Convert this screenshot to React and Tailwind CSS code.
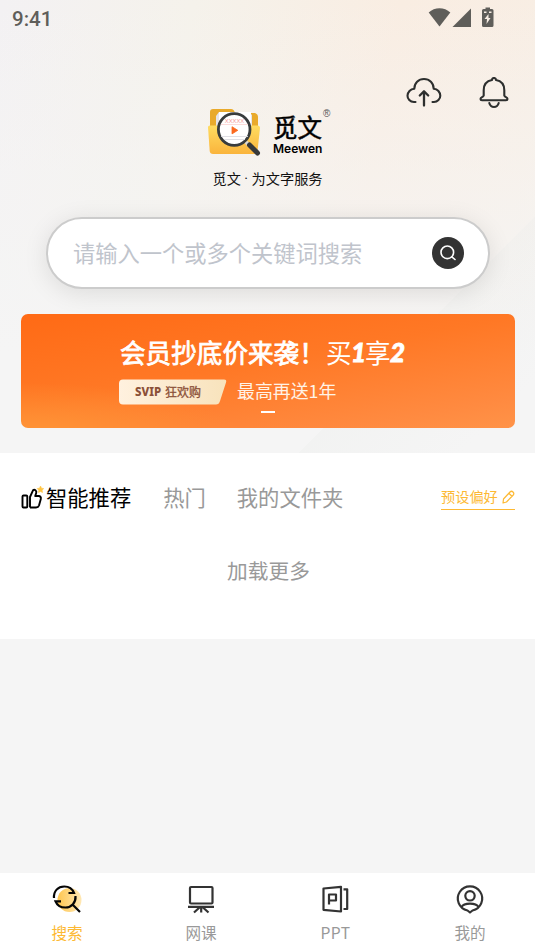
import { useState } from "react";

const navItems = [
  { key: "search", label: "搜索", Icon: SearchNavIcon },
  { key: "course", label: "网课", Icon: BoardIcon },
  { key: "ppt", label: "PPT", Icon: PptIcon },
  { key: "mine", label: "我的", Icon: UserIcon },
];

function StatusBar() {
  return (
    <div className="flex h-[38px] items-center justify-between pl-3 pr-[41px] text-[#5f5e5a]">
      <span className="font-['Roboto'] text-[20.5px] font-medium leading-6">9:41</span>
      <svg width="66" height="22" viewBox="0 0 66 22" fill="currentColor" className="-mt-[3px]">
        <path d="M.7 5.500C6.500-.3 16.500-.3 22.300 5.500L11.500 19.500Z" />
        <path d="M43 1.500V20H24.500Z" />
        <path
          fillRule="evenodd"
          d="M57.500 .5h4.500v1.500h2q1.500 0 1.500 1.500v15q0 1.500-1.500 1.500h-8.500q-1.500 0-1.500-1.500V3.500q0-1.500 1.500-1.500h2ZM60.500 7l-4 5h2.500l-.5 5 4-6H60.500ZM56 4.500v1.500h2.500v-1.500ZM61 4.500v1.500h2.500v-1.500Z"
        />
      </svg>
    </div>
  );
}

function CloudUploadIcon() {
  return (
    <svg width="36" height="32" viewBox="0 0 36 32" fill="none" stroke="#2d2f2e" strokeWidth="2.100" strokeLinecap="round" strokeLinejoin="round">
      <path d="M9.500 25H8C4 25 1.500 22 1.500 18.800C1.500 15 4.500 12 8.300 11.700C8.300 6 12.500 2 18 2S27.700 6 27.700 11.700C31.500 12 34.300 15 34.300 18.800C34.300 22 31.500 25 28 25H26.500" />
      <path d="M18 28.500V14.500M13.800 18.500L18 14.200L22.200 18.500" strokeWidth="2.300" />
    </svg>
  );
}

function BellIcon() {
  return (
    <svg width="30" height="32" viewBox="0 0 30 32" fill="none" stroke="#2d2f2e" strokeWidth="2.100" strokeLinecap="round" strokeLinejoin="round">
      <path d="M13 3a2 2 0 0 1 4 0C22.500 4 25.300 7.900 25.300 13.200V18.500C25.800 20.300 28.500 20 28.500 22Q28.500 23.200 27 23.200H3Q1.500 23.200 1.500 22C1.500 20 4.200 20.300 4.700 18.500V13.200C4.700 7.900 7.500 4 13 3Z" />
      <path d="M10.300 26C11 28.500 12.700 30 15 30S19 28.500 19.700 26" />
    </svg>
  );
}

function FolderLogo() {
  return (
    <svg width="53" height="48" viewBox="0 0 53 48" className="shrink-0">
      <defs>
        <linearGradient id="folder" x1="0" y1="0" x2="0" y2="1">
          <stop offset="0" stopColor="#ffdc60" />
          <stop offset="1" stopColor="#fab43c" />
        </linearGradient>
      </defs>
      <path d="M2 21V4Q2 1 5 1H23Q26 1 27 5H47Q50 6 50 9V22Z" fill="#e9aa2b" />
      <path d="M8 8L11 4H41L44 7V37H8Z" fill="#e5e4e8" />
      <path d="M11 4H43V35H11Z" fill="#fff" />
      <path d="M0 19Q0 17.500 2 17.500H49.500Q52 17.500 52 20L49.500 43Q49 46 46 46H5Q2 46 1.700 43Z" fill="url(#folder)" />
      <circle cx="26.200" cy="21.500" r="15.800" fill="#fff" stroke="#383c3d" strokeWidth="2.800" />
      <text x="26.500" y="14.500" textAnchor="middle" fontFamily="Liberation Sans" fontSize="5.800" fill="#f59b9a">XXXXX</text>
      <path d="M13 16.500H40" stroke="#fbd2d0" strokeWidth=".8" />
      <path d="M13 28.500H40M16 31.500H37" stroke="#dcdce2" strokeWidth=".9" />
      <path d="M24 18.700L29.800 22.300L24 25.900Z" fill="#fb691e" stroke="#fb691e" strokeWidth=".8" strokeLinejoin="round" />
      <path d="M38 34L41 37.300" stroke="#d8d9d8" strokeWidth="3.500" />
      <path d="M41.500 37L49.500 45" stroke="#37393a" strokeWidth="5" strokeLinecap="round" />
    </svg>
  );
}

function Header() {
  return (
    <>
      <div className="mt-[39px] flex h-[31px] items-start justify-end gap-[37px] pr-[26px]">
        <CloudUploadIcon />
        <BellIcon />
      </div>
      <div className="flex flex-col items-center">
        <div className="flex h-[48px] w-[119px] items-start gap-3">
          <FolderLogo />
          <div className="flex flex-col">
            <div className="flex h-[35px] items-start">
              <span className="w-[50px] whitespace-nowrap text-[24.500px] leading-[37px] text-black [-webkit-text-stroke:0.5px_#000]">觅文</span>
              <span className="mt-[1px] font-['Liberation_Sans'] text-[10px] leading-[10px] text-[#555]">®</span>
            </div>
            <span className="font-['Inter'] text-[12px] font-semibold leading-[12px] text-black">Meewen</span>
          </div>
        </div>
        <p className="mt-[12px] text-[14.200px] leading-[20px] text-[#111]">
          觅文<span className="font-['Roboto']"> · </span>为文字服务
        </p>
      </div>
    </>
  );
}

function SearchBox() {
  return (
    <div className="mx-[46px] mt-[28px] flex h-[72px] w-[444px] items-center justify-between rounded-full border-2 border-[#ccc] bg-white pl-[25px] pr-[24px] shadow-[0_4px_24px_rgba(0,0,0,0.1)]">
      <span className="-mt-[3px] text-[22.250px] leading-[32px] text-[#c0c4cc]">请输入一个或多个关键词搜索</span>
      <button className="flex size-8 items-center justify-center rounded-full bg-[#333]">
        <svg width="16" height="16" viewBox="0 0 16 16" fill="none" stroke="#fff" strokeWidth="1.600" strokeLinecap="round">
          <circle cx="7.300" cy="7.300" r="6.300" />
          <path d="M11.800 11.800L15 14.500" />
        </svg>
      </button>
    </div>
  );
}

function Banner() {
  return (
    <div className="mx-[21px] mt-[25px] flex h-[114px] w-[494px] flex-col rounded-[7px] bg-[radial-gradient(ellipse_at_0%_110%,#ff9838_0%,transparent_32%),linear-gradient(170deg,#ff6a15_0%,#ff7825_45%,#ff8a40_85%,#ff9348_100%)] pl-[98px] text-white">
      <div className="mt-[20px] flex h-[36px] items-center whitespace-nowrap pl-[1px] text-[25.600px] leading-[36px]">
        <span className="w-[206px] [-webkit-text-stroke:0.8px_#fff]">会员抄底价来袭！</span>
        <span className="w-[25px]">买</span>
        <span className="w-[14px] font-['Lato'] text-[26px] font-black italic [-webkit-text-stroke:0.8px_#fff]">1</span>
        <span className="w-[25px]">享</span>
        <span className="font-['Lato'] text-[26px] font-black italic [-webkit-text-stroke:0.8px_#fff]">2</span>
      </div>
      <div className="mt-[8px] flex h-[27px] items-center">
        <div className="relative flex h-[26px] w-[108px] items-center pl-[16px] text-[#8b5038]">
          <svg className="absolute left-0 top-0" width="108" height="26" viewBox="0 0 108 26">
            <defs>
              <linearGradient id="tag">
                <stop offset="0" stopColor="#fff1df" />
                <stop offset="1" stopColor="#f8e3bc" />
              </linearGradient>
            </defs>
            <path d="M4 .5H105Q108 .5 107 3.500L101 22Q100 25.500 97 25.500H4Q0 25.500 0 21.500V4.500Q0 .5 4 .5Z" fill="url(#tag)" />
          </svg>
          <span className="relative w-[30px] font-['Noto_Sans'] text-[11.500px] font-extrabold">SVIP</span>
          <span className="relative text-[12px] [-webkit-text-stroke:0.3px_#8b5038]">狂欢购</span>
        </div>
        <span className="-mt-[3px] ml-[10px] text-[17.900px] leading-[26px] text-[#fff3e6]">最高再送1年</span>
      </div>
      <span className="ml-[142px] mt-[6px] h-[2px] w-[14px] bg-white" />
    </div>
  );
}

function ThumbIcon() {
  return (
    <svg width="24" height="24" viewBox="0 0 24 24" fill="none" stroke="#000" strokeWidth="1.900" strokeLinejoin="round">
      <rect x="2.500" y="10.500" width="4.800" height="12" rx="1" />
      <path d="M10 22.500V12L13 5.300C14.500 4 17 5.500 16.200 8L15.200 11H19Q21.300 11.500 20.800 14L19 20.500Q18.300 22.500 16 22.500H10" />
      <path d="M20.500 1L21.500 3.200L23.700 3.500L22.200 5.200L22.500 7.500L20.500 6.500L18.500 7.500L18.800 5.200L17.200 3.500L19.500 3.200Z" fill="#ffc544" stroke="#ffc544" strokeWidth=".6" />
    </svg>
  );
}

function Feed() {
  return (
    <section className="mt-[25px] h-[186px] bg-white">
      <div className="flex h-[88px] items-center pl-[20px] pr-[20px] text-[21.300px] leading-[32px] text-[#999]">
        <div className="flex items-center gap-[2px] text-black">
          <ThumbIcon />
          <span>智能推荐</span>
        </div>
        <span className="ml-[32px]">热门</span>
        <span className="ml-[31px]">我的文件夹</span>
        <div className="ml-auto flex h-[25px] w-[74px] items-center justify-between border-b border-[#fdb933] text-[14.200px] text-[#fdb933]">
          <span className="-mt-[2px] leading-5">预设偏好</span>
          <svg width="13" height="14" viewBox="0 0 13 14" fill="none" stroke="#fdb933" strokeWidth="1.200" strokeLinejoin="round">
            <path d="M1 13L1.500 9L8 2Q9.500.5 11 2T11.300 5L4.500 12ZM6.800 3.300L10 6.300" />
          </svg>
        </div>
      </div>
      <p className="mt-[13px] pl-[2px] text-center text-[20.700px] leading-[32px] text-[#999]">加载更多</p>
    </section>
  );
}

function SearchNavIcon() {
  return (
    <svg width="30" height="30" viewBox="0 0 30 30" fill="none" stroke="#050505" strokeWidth="2.200">
      <defs>
        <linearGradient id="glow" x1="0" x2="1">
          <stop offset="0" stopColor="#ffc64f" />
          <stop offset="1" stopColor="#ffe8b5" />
        </linearGradient>
      </defs>
      <circle cx="17.500" cy="16" r="12" fill="url(#glow)" stroke="none" />
      <path d="M2 14C1.500 7 6 2.500 12.300 2.500C17 2.500 20.500 5 22 9H16.500M23.500 12C24 18.500 19.500 23.500 13.500 23.500C8.500 23.500 5 21 3.500 17.300H9M21 21L28 28" />
    </svg>
  );
}

function BoardIcon() {
  return (
    <svg width="30" height="30" viewBox="0 0 30 30" fill="none" stroke="#333" strokeWidth="2.200" strokeLinejoin="round">
      <rect x="4" y="3" width="22.500" height="16.500" rx="1" />
      <path d="M2 22.800H28M8 28.500L13.500 23.500M22.500 28.500L17 23.500M15.200 23V28.500" />
    </svg>
  );
}

function PptIcon() {
  return (
    <svg width="30" height="30" viewBox="0 0 30 30" fill="none" stroke="#333" strokeWidth="2.200" strokeLinejoin="round">
      <path d="M2.500 4.500L20 2.800V27.500L2.500 25.800ZM22.500 5.300H26.200V25H22.500M8 20.500V10.500H15V16.500H8" />
    </svg>
  );
}

function UserIcon() {
  return (
    <svg width="30" height="30" viewBox="0 0 30 30" fill="none" stroke="#333" strokeWidth="2.200" strokeLinejoin="round">
      <path d="M12.500 26.500A12.200 12.200 0 1 1 17.500 26.500L15 28.500Z" />
      <circle cx="15" cy="11.800" r="4.700" />
      <path d="M6.500 23C9 18.500 21 18.500 23.500 23" />
    </svg>
  );
}

function BottomNav({ active, onChange }) {
  return (
    <nav className="grid h-[78px] grid-cols-[134px_134px_135px_134px] bg-white">
      {navItems.map(({ key, label, Icon }) => (
        <button key={key} onClick={() => onChange(key)} className="flex flex-col items-center pt-[11px]">
          <Icon />
          <span
            className={`mt-[7px] text-[15.600px] leading-[22px] ${active === key ? "text-[#fdb933]" : "text-[#999]"} ${key === "ppt" ? "tracking-[0.4px]" : ""}`}
          >
            {label}
          </span>
        </button>
      ))}
    </nav>
  );
}

export default function App() {
  const [active, setActive] = useState("search");

  return (
    <div className="flex h-[951px] w-[535px] flex-col overflow-hidden bg-[#f5f5f5] font-['Noto_Sans_CJK_SC',sans-serif]">
      <div className="h-[639px] bg-[linear-gradient(135deg,transparent_64%,rgba(235,237,235,0.3)_64%,transparent_78%),linear-gradient(to_bottom,transparent_0%,#f5f5f5_55%),linear-gradient(100deg,#f3f1f3_0%,#f5f2eb_30%,#f9ede2_62%,#f8eee4_85%,#f5f1ea_100%)]">
        <StatusBar />
        <Header />
        <SearchBox />
        <Banner />
        <Feed />
      </div>
      <div className="flex-1" />
      <BottomNav active={active} onChange={setActive} />
    </div>
  );
}
